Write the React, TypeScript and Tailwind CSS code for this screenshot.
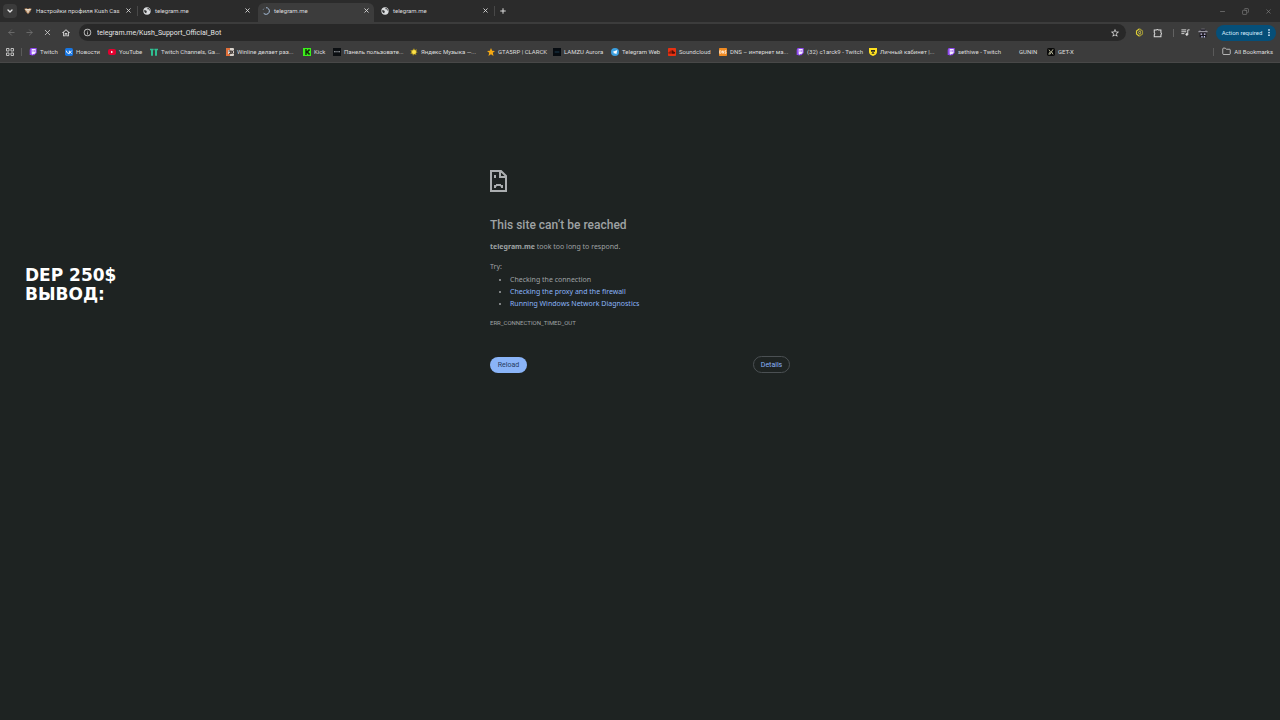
import type { ReactNode } from "react";
import { ArrowLeft, ArrowRight, ChevronDown, Copy, Folder, Minus, Plus, X } from "lucide-react";
import { MdInfoOutline, MdOutlineHome, MdStarBorder } from "react-icons/md";

const Globe = () => (
  <svg viewBox="0 0 24 24" className="size-2 shrink-0" aria-hidden="true">
    <circle cx="12" cy="12" r="11" fill="#dadcde" />
    <path d="M3 10c3-1 7 0 8 2s-1 3-1 7C6 19 3 14 3 10zM14 3c-2 3 0 5 3 4s1 4 4 5c1-4-2-9-7-9z" fill="#343536" />
  </svg>
);

const Spinner = () => (
  <svg viewBox="0 0 24 24" className="size-2 shrink-0" aria-hidden="true">
    <path d="M12 2a10 10 0 1 1-7 17" fill="none" stroke="#a9c0dc" strokeWidth="3" />
    <path d="M3 9a10 10 0 0 1 4-5" fill="none" stroke="#6b7a8c" strokeWidth="3" />
  </svg>
);

const KushIcon = () => (
  <svg viewBox="0 0 24 24" className="size-2 shrink-0" aria-hidden="true">
    <path d="M1 5l6-2 5 3 5-3 6 2-4 9-7 8-7-8z" fill="#a77b55" />
    <path d="M2 6h20l-5 5H7z" fill="#e8dccb" />
    <path d="M8 13h8l-4 6z" fill="#f2e6d6" />
  </svg>
);

const Tile = ({ children }: { children: ReactNode }) => (
  <svg viewBox="0 0 24 24" className="size-2 shrink-0" aria-hidden="true">
    {children}
  </svg>
);

const TwitchIcon = () => (
  <Tile>
    <path d="M5 0h18v15l-7 7h-5l-3 2v-3H2V5z" fill="#8f48ef" />
    <path d="M8 3h12v11l-4 4h-4l-3 3v-3H8z" fill="#f3edff" />
    <path d="M12 6v6M17 6v6" stroke="#8f48ef" strokeWidth="2" />
  </Tile>
);

const VkIcon = () => (
  <Tile>
    <rect width="24" height="24" rx="5" fill="#1876e2" />
    <path d="M4 8c1 6 4 9 9 9V8M20 8c-1 3-3 4-6 5 3 0 5 2 6 4" fill="none" stroke="#fff" strokeWidth="2.8" />
  </Tile>
);

const YoutubeIcon = () => (
  <Tile>
    <rect y="3" width="24" height="18" rx="6" fill="#e3002f" />
    <path d="M9 8l7 4-7 4z" fill="#fff" />
  </Tile>
);

const TrackerIcon = () => (
  <Tile>
    <path d="M0 2h11v5H9v16H3V7H0zM13 2h11v5h-3v16h-6V7h-2z" fill="#2fbe91" />
  </Tile>
);

const WinlineIcon = () => (
  <Tile>
    <rect width="24" height="24" rx="3" fill="#d9d2cb" />
    <path d="M0 0h12v6H6v12h6v6H0z" fill="#e1703a" />
    <path d="M8 9h6v8H9M15 7l7 11M22 7l-7 11" fill="none" stroke="#3b3230" strokeWidth="3" />
  </Tile>
);

const KickIcon = () => (
  <Tile>
    <rect width="24" height="24" fill="#3bf01a" />
    <path d="M7 3h4v7h2V7h3V4h4v5h-3v6h3v5h-4v-3h-3v-3h-2v7H7z" fill="#0b1a08" />
  </Tile>
);

const PanelIcon = () => (
  <Tile>
    <rect width="24" height="24" fill="#0c0f12" />
    <path d="M3 10h5v3H3zM10 10h4v3h-4zM16 10h5v3h-5z" fill="#a7adb3" />
  </Tile>
);

const YandexIcon = () => (
  <Tile>
    <path d="M12 1l3 5 6-2-2 6 4 3-5 2 1 6-6-2-4 4-2-6-6 0 3-5-3-5 6 0z" fill="#b39a22" />
    <circle cx="12" cy="12" r="6" fill="#ffe34a" />
  </Tile>
);

const StarIcon = () => (
  <Tile>
    <path d="M12 0l3.500 8 8.500.8-6.500 5.800 2 9.100-7.500-4.700-7.500 4.700 2-9.100L0 8.800 8.500 8z" fill="#f5a913" />
  </Tile>
);

const LamzuIcon = () => (
  <Tile>
    <rect width="24" height="24" fill="#070c11" />
    <path d="M5 12h14" stroke="#28536c" strokeWidth="2" />
  </Tile>
);

const TelegramIcon = () => (
  <Tile>
    <circle cx="12" cy="12" r="12" fill="#3b9fe0" />
    <path d="M4 12l15-6-3 13-5-4-2 3-1-5z" fill="#fff" />
  </Tile>
);

const SoundcloudIcon = () => (
  <Tile>
    <rect width="24" height="24" rx="2" fill="#e73112" />
    <path d="M3 12v5M6 10v7M9 8v9" stroke="#4d0f06" strokeWidth="2" />
    <path d="M11 7c5-1 6 3 6 4 6-1 6 6 1 6h-7z" fill="#4d0f06" />
  </Tile>
);

const DnsIcon = () => (
  <Tile>
    <rect width="24" height="24" rx="2" fill="#ef8a22" />
    <path d="M2 8h2c4 0 4 8 0 8H2zM10 17V8l4 8V8M22 8h-4v4h3v4h-4" fill="none" stroke="#fff" strokeWidth="2" />
  </Tile>
);

const TbankIcon = () => (
  <Tile>
    <path d="M0 0h24v12c0 6-5 9-12 12C5 21 0 18 0 12z" fill="#ffe11f" />
    <path d="M6 6h12v5h-3V9h-1v6h2v2H8v-2h2V9H9v2H6z" fill="#282828" />
  </Tile>
);

const GetxIcon = () => (
  <Tile>
    <rect width="24" height="24" rx="5" fill="#0a0a0a" />
    <path d="M6 5l4 6-5 8M18 4L8 20M14 12l4 7" fill="none" stroke="#d9d8b4" strokeWidth="2.500" />
  </Tile>
);

const tabs = [
  { title: "Настройки профиля Kush Cas", icon: <KushIcon />, active: false },
  { title: "telegram.me", icon: <Globe />, active: false },
  { title: "telegram.me", icon: <Spinner />, active: true },
  { title: "telegram.me", icon: <Globe />, active: false },
];

const bookmarks = [
  { label: "Twitch", icon: <TwitchIcon />, width: "w-9" },
  { label: "Новости", icon: <VkIcon />, width: "w-[43px]" },
  { label: "YouTube", icon: <YoutubeIcon />, width: "w-[42px]" },
  { label: "Twitch Channels, Ga...", icon: <TrackerIcon />, width: "w-[76px]" },
  { label: "Winline делает раз...", icon: <WinlineIcon />, width: "w-[77px]" },
  { label: "Kick", icon: <KickIcon />, width: "w-[30px]" },
  { label: "Панель пользовате...", icon: <PanelIcon />, width: "w-[77px]" },
  { label: "Яндекс Музыка —...", icon: <YandexIcon />, width: "w-[77px]" },
  { label: "GTA5RP | CLARCK", icon: <StarIcon />, width: "w-[66px]" },
  { label: "LAMZU Aurora", icon: <LamzuIcon />, width: "w-[58px]" },
  { label: "Telegram Web", icon: <TelegramIcon />, width: "w-[57px]" },
  { label: "Soundcloud", icon: <SoundcloudIcon />, width: "w-[51px]" },
  { label: "DNS – интернет ма...", icon: <DnsIcon />, width: "w-[77px]" },
  { label: "(32) c1arck9 - Twitch", icon: <TwitchIcon />, width: "w-[73px]" },
  { label: "Личный кабинет |...", icon: <TbankIcon />, width: "w-[78px]" },
  { label: "sethiwe - Twitch", icon: <TwitchIcon />, width: "w-[61px]" },
  { label: "GUNIN", icon: <span className="size-2 shrink-0" />, width: "w-[39px]" },
  { label: "GET-X", icon: <GetxIcon />, width: "w-9" },
];

function TabStrip() {
  return (
    <div className="flex h-[22px] items-center bg-[#2b2b2b] pl-[3px]">
      <button aria-label="Search tabs" className="flex size-[14px] items-center justify-center rounded bg-[#3b3b3b]">
        <ChevronDown className="size-2 text-[#e3e3e3]" strokeWidth={4} />
      </button>
      <div className="ml-[3px] flex h-full items-end">
        {tabs.map((tab, i) => (
          <div key={i} className="flex h-full w-[119px] items-end">
            <div
              className={
                tab.active
                  ? "flex h-[19px] w-[116px] items-center rounded-t-md bg-[#3c3c3c] px-1 pb-1"
                  : "flex h-[19px] w-[116px] items-center px-1 pb-1"
              }
            >
              {tab.icon}
              <span className="ml-1 flex-1 whitespace-nowrap">{tab.title}</span>
              <button aria-label="Close tab" className="ml-1">
                <X className="size-[7px]" strokeWidth={3} />
              </button>
            </div>
            {(i === 0 || i === 3) && <div className="mb-[6px] ml-px h-[10px] w-px bg-[#484848]" />}
          </div>
        ))}
      </div>
      <button aria-label="New tab" className="ml-[3px]">
        <Plus className="size-2" strokeWidth={3} />
      </button>
      <div className="ml-auto flex items-center gap-4 pr-2 text-[#8c8c8c]">
        <button aria-label="Minimize">
          <Minus className="size-[7px]" />
        </button>
        <button aria-label="Restore">
          <Copy className="size-[7px] -scale-x-100" />
        </button>
        <button aria-label="Close">
          <X className="size-[7px]" />
        </button>
      </div>
    </div>
  );
}

function Toolbar() {
  return (
    <div className="flex h-[21px] items-center bg-[#3c3c3c] pr-1 pl-[7px]">
      <div className="flex items-center gap-[9px]">
        <button aria-label="Back">
          <ArrowLeft className="size-[9px] text-[#777]" />
        </button>
        <button aria-label="Forward">
          <ArrowRight className="size-[9px] text-[#777]" />
        </button>
        <button aria-label="Stop loading">
          <X className="size-[9px]" />
        </button>
        <button aria-label="Home">
          <MdOutlineHome className="size-[10px]" />
        </button>
      </div>
      <div className="ml-2 flex h-[17px] flex-1 items-center rounded-full bg-[#282828] pr-[6px] pl-1">
        <MdInfoOutline className="size-[9px] shrink-0" />
        <input
          aria-label="Address"
          defaultValue="telegram.me/Kush_Support_Official_Bot"
          className="ml-[5px] min-w-0 flex-1 bg-transparent text-[7px] leading-[10px] text-[#e6e6e6] outline-none"
        />
        <button aria-label="Bookmark this page">
          <MdStarBorder className="size-[10px]" />
        </button>
      </div>
      <div className="ml-[9px] flex items-center">
        <button aria-label="Extension">
          <svg viewBox="0 0 24 24" className="size-[9px]" fill="none" strokeWidth="3">
            <path d="M12 2L4 8v8l8 6" stroke="#e0cf35" />
            <path d="M12 2l8 6v8l-8 6" stroke="#9a9135" />
            <path d="M13 7l-4 5 4 5 2-5z" stroke="#e9dc58" strokeWidth="2" />
          </svg>
        </button>
        <button aria-label="Extensions" className="ml-[9px]">
          <svg viewBox="0 0 24 24" className="size-[10px]" fill="none" stroke="currentColor" strokeWidth="2.500">
            <path d="M3 5h5a3 3 0 0 1 5 0h6v6a3 3 0 0 1 0 5v5H3v-5a3 3 0 0 0 0-5z" />
          </svg>
        </button>
        <div className="mr-[7px] ml-[10px] h-2 w-px bg-[#626262]" />
        <button aria-label="Media control">
          <svg viewBox="0 0 24 24" className="size-[9px]" fill="none" stroke="currentColor" strokeWidth="2.500">
            <path d="M1 5h13M1 10h13M1 15h8M18 17V5h5" />
            <circle cx="15.500" cy="17" r="2.500" fill="currentColor" />
          </svg>
        </button>
        <button aria-label="Profile" className="ml-2">
          <svg viewBox="0 0 24 24" className="size-[10px]">
            <path d="M4 8h16v14H4z" fill="#17151d" />
            <path d="M1 7l5-1 2-4h8l2 4 5 1v3H1z" fill="#9695a0" />
            <path d="M6 3h12v4H6z" fill="#211f29" />
            <path d="M6 13h4v3H6zM14 13h4v3h-4z" fill="#d7d0f2" />
            <path d="M8 19h3v4H8zM14 19h3v4h-3z" fill="#bfc4ed" />
          </svg>
        </button>
        <button className="ml-2 flex h-4 w-[60px] items-center justify-center gap-[6px] rounded-full bg-[#054f79] whitespace-nowrap text-[#d3e9fb]">
          Action required
          <svg viewBox="0 0 4 16" className="h-[7px] w-[2px] shrink-0" fill="currentColor" aria-hidden="true">
            <circle cx="2" cy="2" r="2" />
            <circle cx="2" cy="8" r="2" />
            <circle cx="2" cy="14" r="2" />
          </svg>
        </button>
      </div>
    </div>
  );
}

function BookmarksBar() {
  return (
    <nav className="flex h-5 items-center border-b border-[#484848] bg-[#3c3c3c] pr-[7px] pb-[2px] pl-[6px] whitespace-nowrap">
      <button aria-label="Apps">
        <svg viewBox="0 0 16 16" className="size-2" fill="none" stroke="#c0c0c0" strokeWidth="2">
          <path d="M1 1h5v5H1zM10 1h5v5h-5zM1 10h5v5H1zM10 10h5v5h-5z" />
        </svg>
      </button>
      <div className="mx-[7px] h-2 w-px bg-[#5a5a5a]" />
      {bookmarks.map((item) => (
        <a key={item.label} href="#" className={`flex shrink-0 items-center gap-[3px] ${item.width}`}>
          {item.icon}
          {item.label}
        </a>
      ))}
      <div className="ml-auto h-2 w-px bg-[#5a5a5a]" />
      <a href="#" className="ml-2 flex items-center gap-[3px]">
        <Folder className="size-[9px]" />
        All Bookmarks
      </a>
    </nav>
  );
}

function ErrorPage() {
  return (
    <main className="mx-auto w-[300px] pt-[107px] text-[7px] leading-3 text-[#9fa2a4]">
      <svg viewBox="0 0 17 22" className="h-[22px] w-[17px]" fill="none" stroke="#abaeb0" strokeWidth="2" aria-hidden="true">
        <path d="M1 1h10l5 5v15H1zM10 1v6h6M5 5v3M5 18v-2h1.500M6 15h5M12 18v-2h-1.500" />
      </svg>
      <h1 className="mt-[25px] font-['Roboto',sans-serif] text-[12px] leading-4 font-medium">This site can’t be reached</h1>
      <p className="mt-2">
        <strong className="font-bold">telegram.me</strong> took too long to respond.
      </p>
      <p className="mt-2">Try:</p>
      <ul className="mt-px list-disc pl-5">
        <li>Checking the connection</li>
        <li>
          <a href="#" className="text-[#8ab4f8]">
            Checking the proxy and the firewall
          </a>
        </li>
        <li>
          <a href="#" className="text-[#8ab4f8]">
            Running Windows Network Diagnostics
          </a>
        </li>
      </ul>
      <p className="mt-[7px] font-['Roboto',sans-serif] text-[6px]">ERR_CONNECTION_TIMED_OUT</p>
      <div className="mt-[27px] flex items-center justify-between font-['Roboto',sans-serif]">
        <button className="h-4 w-[37px] rounded-full bg-[#8ab4f8] text-[#263c61]">Reload</button>
        <button className="h-[17px] w-[37px] rounded-full border border-[#4b5053] text-[#8ab4f8]">Details</button>
      </div>
    </main>
  );
}

export default function App() {
  return (
    <div className="relative min-h-screen bg-[#1e2322] font-['Noto_Sans','Open_Sans',sans-serif]">
      <header className="font-['Roboto',sans-serif] text-[6px] leading-[10px] text-[#dcdcdc]">
        <TabStrip />
        <Toolbar />
        <BookmarksBar />
      </header>
      <ErrorPage />
      <p className="absolute top-[266px] left-[25px] font-['DejaVu_Sans',sans-serif] text-[17px] leading-[19px] font-bold text-white">
        DEP 250$
        <br />
        ВЫВОД:
      </p>
    </div>
  );
}
